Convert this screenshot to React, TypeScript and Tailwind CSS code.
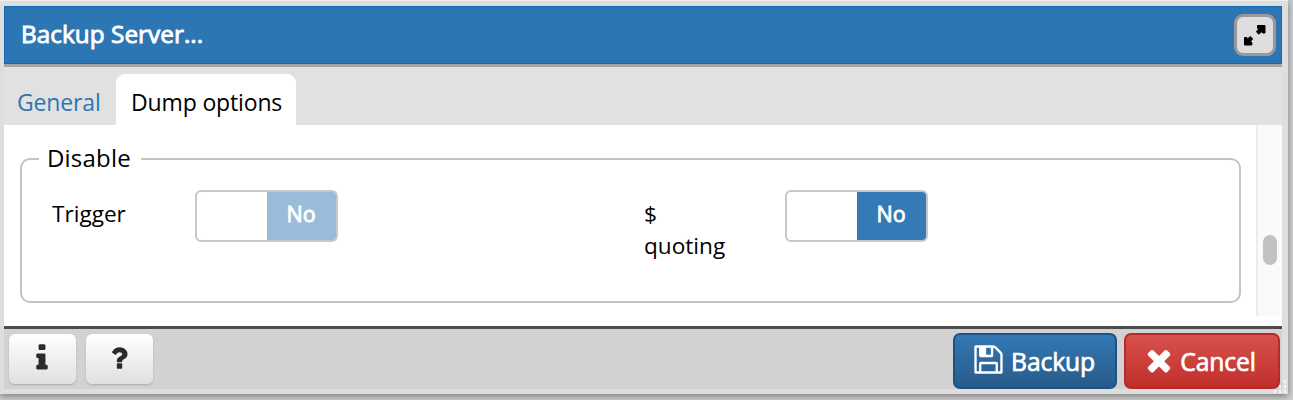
import type { ReactNode } from "react";

const floppy =
  "M512 1536h768v-384h-768v384zm896 0h128v-896q0-14-10-38.5t-20-34.5l-281-281q-10-10-34-20t-39-10v416q0 40-28 68t-68 28h-576q-40 0-68-28t-28-68v-416h-128v1280h128v-416q0-40 28-68t68-28h832q40 0 68 28t28 68v416zm-384-928v-320q0-13-9.5-22.5t-22.5-9.5h-192q-13 0-22.5 9.5t-9.5 22.5v320q0 13 9.5 22.5t22.5 9.5h192q13 0 22.5-9.5t9.5-22.5zm640 32v928q0 40-28 68t-68 28h-1344q-40 0-68-28t-28-68v-1344q0-40 28-68t68-28h928q40 0 88 20t76 48l280 280q28 28 48 76t20 88z";
const times =
  "M1490 1322q0 40-28 68l-136 136q-28 28-68 28t-68-28l-294-294-294 294q-28 28-68 28t-68-28l-136-136q-28-28-28-68t28-68l294-294-294-294q-28-28-28-68t28-68l136-136q28-28 68-28t68 28l294 294 294-294q28-28 68-28t68 28l136 136q28 28 28 68t-28 68l-294 294 294 294q28 28 28 68z";
const info =
  "M1216 1344v128q0 26-19 45t-45 19h-512q-26 0-45-19t-19-45v-128q0-26 19-45t45-19h64v-384h-64q-26 0-45-19t-19-45v-128q0-26 19-45t45-19h384q26 0 45 19t19 45v576h64q26 0 45 19t19 45zm-128-1152v192q0 26-19 45t-45 19h-256q-26 0-45-19t-19-45v-192q0-26 19-45t45-19h256q26 0 45 19t19 45z";
const question =
  "M1088 1256v240q0 16-12 28t-28 12h-240q-16 0-28-12t-12-28v-240q0-16 12-28t28-12h240q16 0 28 12t12 28zm316-600q0 54-15.5 101t-35 76.5-55 59.5-57.5 43.5-61 35.5q-41 23-68.5 65t-27.5 67q0 17-12 32.5t-28 15.5h-240q-15 0-25.5-18.5t-10.5-37.5v-45q0-83 65-156.5t143-108.5q59-27 84-56t25-76q0-42-46.5-74t-107.5-32q-65 0-108 29-35 25-107 115-13 16-31 16-12 0-25-8l-164-125q-13-10-15.5-25t5.5-28q160-266 464-266 80 0 161 31t146 83 106 127.5 41 158.5z";

function Toggle({ disabled = false }: { disabled?: boolean }) {
  return (
    <div className="mt-[2px] flex h-[52px] w-[143px] shrink-0 overflow-hidden rounded-md border-2 border-[#c8c8c8] bg-white">
      <div className="w-[70px]" />
      <div
        className={
          "flex flex-1 items-center justify-center pr-px pb-[4px] text-[21.5px] text-white [-webkit-text-stroke:0.8px_white] " +
          (disabled ? "bg-[#9abcdb]" : "bg-[#337ab7]")
        }
      >
        No
      </div>
    </div>
  );
}

function SmallButton({ label, children }: { label: string; children: ReactNode }) {
  return (
    <button
      aria-label={label}
      className="flex h-[50px] w-[67px] items-center justify-center rounded-md bg-linear-to-b from-white to-[#e0e0e0] pr-[2px] pb-[2px] text-[#2b2b2b] shadow-[0_1px_2px_#aaa]"
    >
      {children}
    </button>
  );
}

export default function App() {
  return (
    <div className="h-[400px] w-[1293px] overflow-hidden bg-[#cfcfcf] font-['Open_Sans',sans-serif] text-black">
      <div className="relative h-[394px] w-[1288px] border-t border-[#efefef] bg-[#dedede] pt-[5px] pr-[6px] pl-[4px] shadow-[0px_2px_7px_#777]">
        <header className="flex h-[58px] items-center justify-between border border-[#1268b3] bg-[#2c76b4] pr-[5px] pl-4">
          <h1 className="pb-px text-[24.3px] tracking-[0.05px] text-white [-webkit-text-stroke:0.9px_white]">Backup Server...</h1>
          <button
            aria-label="Maximize"
            className="flex h-[42px] w-[42px] items-center justify-center rounded-[9px] border-3 border-[#999] bg-[#dedede]"
          >
            <svg width="24" height="24" viewBox="0 0 24 24" fill="#000" stroke="#000" strokeWidth="1" strokeLinejoin="round">
              <path d="M14.500 2.500h7.500v7.500h-2.500V8l-3.700 3.200-2.600-2.600 3.300-3.300h-2zM1.500 14.500h2.500v2l3.200-3 2.600 2.500-3.100 3.100h2.100v2.900H1.500z" />
            </svg>
          </button>
        </header>
        <nav className="flex h-[61px] items-end border-t-3 border-[#a5a5a5] bg-[#e1e1e1]">
          <div className="flex h-[51px] w-[112px] items-center pt-[6px] pb-px pl-[13px] text-[23px] tracking-[-0.15px] text-[#2c76b4]">General</div>
          <div className="flex h-[51px] w-[180px] items-center rounded-t-[9px] bg-white pt-[6px] pb-px pl-[15px] text-[23px] tracking-[-0.15px]">
            Dump options
          </div>
        </nav>
        <main className="flex h-[201px] bg-white pb-[10px]">
          <div className="flex-1 pt-[17px] pr-[15px] pl-4">
            <fieldset className="h-[161px] rounded-[10px] border-2 border-[#c4c4c4] pl-[30px]">
              <legend className="-ml-[13px] h-[34px] pr-[10px] pl-[8px] text-[24px] leading-[32px] tracking-[0.2px]">Disable</legend>
              <div className="flex pt-3 text-[22.6px] leading-[32px]">
                <div className="w-[143px] pt-[10px]">Trigger</div>
                <Toggle disabled />
                <div className="ml-[306px] w-[141px] pt-[10px]">
                  $<br />
                  quoting
                </div>
                <Toggle />
              </div>
            </fieldset>
          </div>
          <div className="flex w-[26px] justify-center border-l-2 border-[#ececec] bg-[#fafafa] pt-[110px]">
            <div className="h-[30px] w-[14px] rounded-[7px] bg-[#c1c1c1]" />
          </div>
        </main>
        <footer className="flex h-[63px] items-start border-t-3 border-[#4d4d4d] bg-[#d2d2d2] pt-[5px] pr-[3px] pl-[5px]">
          <div className="flex gap-[10px]">
            <SmallButton label="Information">
              <svg width="32" height="32" viewBox="0 0 1792 1792" fill="currentColor"><path d={info} /></svg>
            </SmallButton>
            <SmallButton label="Help">
              <svg width="30" height="30" viewBox="0 0 1792 1792" fill="currentColor"><path d={question} /></svg>
            </SmallButton>
          </div>
          <div className="-mt-[1px] -mr-px ml-auto flex gap-[7px] text-[24.7px] text-white [-webkit-text-stroke:0.7px_white]">
            <button className="flex h-[56px] w-[164px] items-center justify-center rounded-[7px] border-2 border-[#1d5286] bg-linear-to-b from-[#3478b4] to-[#285b8a] pr-[3px]">
              <svg width="33" height="33" viewBox="0 0 1792 1792" fill="currentColor" className="mr-[6px] mb-1"><path d={floppy} /></svg>
              <span className="pt-[2px] tracking-[-0.15px]">Backup</span>
            </button>
            <button className="flex h-[56px] w-[156px] items-center justify-center rounded-[7px] border-2 border-[#b52b27] bg-linear-to-b from-[#d7504c] to-[#c12e2a] pr-[6px]">
              <svg width="34" height="34" viewBox="0 0 1792 1792" fill="currentColor" className="mr-1 mb-[2px]"><path d={times} /></svg>
              <span className="pt-[2px] tracking-[-0.15px]">Cancel</span>
            </button>
          </div>
        </footer>
        <svg className="absolute right-px bottom-0 h-[15px] w-[15px]" viewBox="0 0 15 15" fill="#f4f4f4">
          <path d="M12 1h2v3h-2zM7 6h2v3H7zM12 6h2v3h-2zM2 11h2v3H2zM7 11h2v3H7zM12 11h2v3h-2z" />
        </svg>
      </div>
    </div>
  );
}
